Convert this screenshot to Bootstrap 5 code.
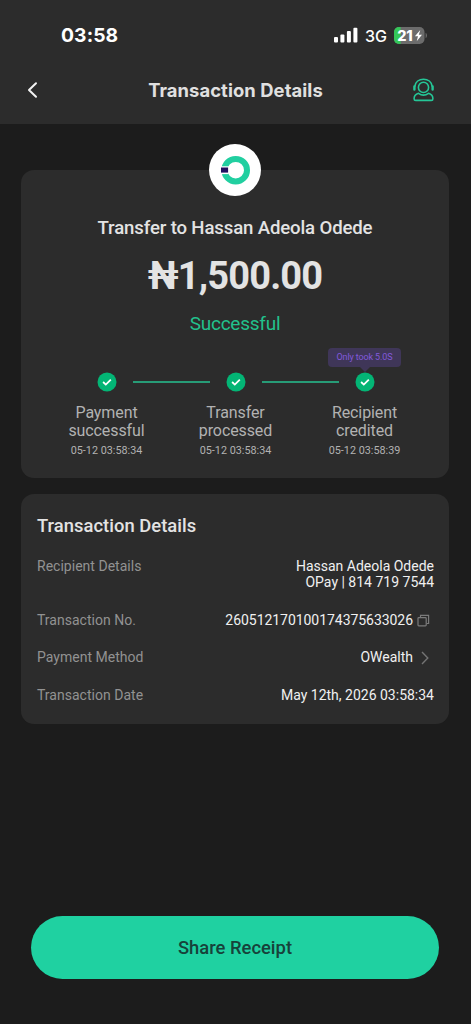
<!DOCTYPE html>
<html lang="en" data-bs-theme="dark">
<head>
<meta charset="utf-8">
<meta name="viewport" content="width=device-width, initial-scale=1">
<title>Transaction Details</title>
<link href="https://cdn.jsdelivr.net/npm/bootstrap@5.3.0/dist/css/bootstrap.min.css" rel="stylesheet">
<style>
body{background:#1c1c1c;color:#e3e3e3;font-family:Roboto,"Liberation Sans",sans-serif;height:1024px;overflow:hidden}
svg{display:block;flex:none}
.topbar{background:#2c2c2c;height:124px;font-family:Inter,"Liberation Sans",sans-serif}
.status{height:70px;padding:0 44px 0 61px}
.clock{font-size:19.3px;font-weight:700;color:#fff;letter-spacing:.1px}
.network{font-size:16px;font-weight:500;color:#fff;margin:1px 7px 0 7px}
.titlebar{height:40px;padding:0 36px 0 26px}
.titlebar h1{font-size:18.4px;font-weight:700;letter-spacing:.07px;color:#e0e0e0}
.titlebar .lead-icon{width:22px}
.panel{background:#2c2c2c;border:0;border-radius:13px;margin:0 22px 0 21px}
.summary{margin-top:46px;height:308px}
.logo{width:52px;height:52px;top:-26px;left:188.3px}
.recipient{font-size:18.6px;font-weight:500;line-height:24px;padding-top:46px;letter-spacing:-.14px}
.amount{font-size:38px;font-weight:700;line-height:46px;margin-top:13px;letter-spacing:-.85px}
.state{font-size:19px;line-height:24px;color:#22c18c;margin-top:13px;letter-spacing:-.25px}
.steps{margin:36px 20px 0 21px}
.step{width:129px;color:#b2b2b2;font-size:16px;line-height:18px;letter-spacing:-.1px}
.step-mark{height:20px;margin-bottom:12px}
.step-link{width:77px;height:2px;background:#279c77;top:9px;left:91px}
.step-time{font-size:10.8px;line-height:14px;margin-top:4px;letter-spacing:0}
.took{background:#3f3658;color:#8259dc;border-radius:4px;width:73px;height:19px;font-size:9px;line-height:19px;letter-spacing:-.12px;top:-24px;left:28px}
.took::after{content:"";position:absolute;left:32px;top:19px;border:5px solid transparent;border-top-color:#3f3658;border-bottom:0}
.details{margin-top:16px;height:230px;padding:20px 15px 0 16px}
.details h2{font-size:18.4px;font-weight:500;line-height:24px;letter-spacing:.03px;color:#e3e3e3;margin:0 0 20px}
.details dt{font-weight:400;color:#929292;font-size:14px;letter-spacing:.02px}
.details dd{color:#f0f0f0;font-size:14px;letter-spacing:0;margin:0;text-align:right}
.details .serial{letter-spacing:-.05px}
.entry{line-height:16px;margin-bottom:21.5px}
.share,.share:hover{margin:192px 32px 0 31px;height:63px;border-radius:32px;background:#1fd1a1;color:#17423a;font-size:18.4px;font-weight:500}
</style>
</head>
<body>
<header class="topbar">
  <div class="status d-flex align-items-center justify-content-between">
    <span class="clock">03:58</span>
    <div class="d-flex align-items-center">
      <svg width="24" height="16" viewBox="0 0 24 16" fill="#fff"><rect x="0" y="10" width="4" height="5.5" rx="1"/><rect x="6.4" y="7.4" width="4" height="8.1" rx="1"/><rect x="12.9" y="4.1" width="4" height="11.4" rx="1"/><rect x="19.4" y=".8" width="4" height="14.7" rx="1"/></svg>
      <span class="network">3G</span>
      <svg width="33" height="17" viewBox="0 0 33 17"><defs><clipPath id="charge"><rect width="30.5" height="17" rx="5"/></clipPath></defs><g clip-path="url(#charge)"><rect width="31" height="17" fill="#6c6c6c"/><rect width="6.6" height="17" fill="#34c759"/></g><path d="M31.6 5.7q1.4.8 1.4 2.8t-1.4 2.8z" fill="#6c6c6c"/><text x="3.2" y="13.700" font-family="Inter" font-size="14.5" font-weight="800" fill="#fff" letter-spacing="-.3">21</text><path d="M26.300 3.100 20.900 9.200h3.100l-1.300 5 5.300-6.400h-3.200z" fill="#fff"/></svg>
    </div>
  </div>
  <nav class="titlebar d-flex align-items-center justify-content-between">
    <svg width="32" height="18" viewBox="0 0 32 18" fill="none" stroke="#f2f2f2" stroke-width="2" stroke-linecap="round" stroke-linejoin="round"><path d="M10 2.200 3 9l7 6.800"/></svg>
    <h1 class="m-0">Transaction Details</h1>
    <svg width="22" height="24" viewBox="0 0 22 24" fill="none" stroke="#25c697" stroke-width="1.6" stroke-linecap="round" stroke-linejoin="round"><circle cx="10.500" cy="9.400" r="5.100"/><path d="M1.900 8.200C2.500 4.100 5.900 1.300 10.500 1.300s8 2.800 8.600 6.900"/><path d="M1.400 8.500v3M19.600 8.500v3" stroke-width="2.400"/><path d="M5.500 15.300c-2.900.8-4.400 3-4.400 5.400 0 1 .5 1.700 1.600 1.700h15.600c1.100 0 1.600-.7 1.600-1.700 0-2.400-1.500-4.600-4.400-5.400-3 2.200-7 2.200-10 0z"/></svg>
  </nav>
</header>
<main>
  <section class="card panel summary text-center">
    <svg class="logo position-absolute" viewBox="0 0 52 52"><circle cx="26" cy="26" r="26" fill="#fff"/><circle cx="26.700" cy="26.200" r="11.300" fill="none" stroke="#21cfa0" stroke-width="6"/><path d="M10 22.300h9.500v7.800H10z" fill="#fff"/><path d="M12 23.500h7.100v5.100H12z" fill="#210f60"/></svg>
    <div class="recipient">Transfer to Hassan Adeola Odede</div>
    <div class="amount">₦1,500.00</div>
    <div class="state">Successful</div>
    <div class="steps d-flex">
      <div class="step position-relative">
        <div class="step-mark d-flex justify-content-center"><svg width="20" height="20" viewBox="0 0 20 20"><circle cx="10" cy="10" r="9.500" fill="#03b575"/><path d="m6.100 10 2.700 2.600 5-5" fill="none" stroke="#fff" stroke-width="1.800"/></svg></div>
        <div class="step-link position-absolute"></div>
        Payment<br>successful<div class="step-time">05-12 03:58:34</div>
      </div>
      <div class="step position-relative">
        <div class="step-mark d-flex justify-content-center"><svg width="20" height="20" viewBox="0 0 20 20"><circle cx="10" cy="10" r="9.500" fill="#03b575"/><path d="m6.100 10 2.700 2.600 5-5" fill="none" stroke="#fff" stroke-width="1.800"/></svg></div>
        <div class="step-link position-absolute"></div>
        Transfer<br>processed<div class="step-time">05-12 03:58:34</div>
      </div>
      <div class="step position-relative">
        <div class="took position-absolute">Only took 5.0S</div>
        <div class="step-mark d-flex justify-content-center"><svg class="position-relative" width="20" height="20" viewBox="0 0 20 20"><circle cx="10" cy="10" r="9.500" fill="#03b575"/><path d="m6.100 10 2.700 2.600 5-5" fill="none" stroke="#fff" stroke-width="1.800"/></svg></div>
        Recipient<br>credited<div class="step-time">05-12 03:58:39</div>
      </div>
    </div>
  </section>
  <section class="card panel details">
    <h2>Transaction Details</h2>
    <dl class="m-0">
      <div class="entry d-flex justify-content-between"><dt>Recipient Details</dt><dd>Hassan Adeola Odede<br>OPay | 814 719 7544</dd></div>
      <div class="entry d-flex justify-content-between"><dt>Transaction No.</dt><dd class="serial d-flex">260512170100174375633026<svg width="21" height="16" viewBox="0 0 21 16" fill="none" stroke="#7b7b7b" stroke-width="1.200"><rect x="5" y="5.600" width="8.200" height="8.200" rx=".8"/><path d="M7.500 5.300V3.400h8.100v8.100h-2.100"/></svg></dd></div>
      <div class="entry d-flex justify-content-between"><dt>Payment Method</dt><dd class="d-flex">OWealth<svg width="21" height="16" viewBox="0 0 21 16" fill="none" stroke="#747474" stroke-width="1.400"><path d="m9 3 5.800 6L9 15"/></svg></dd></div>
      <div class="entry d-flex justify-content-between"><dt>Transaction Date</dt><dd>May 12th, 2026 03:58:34</dd></div>
    </dl>
  </section>
  <div class="d-grid"><button type="button" class="btn share border-0 p-0">Share Receipt</button></div>
</main>
<script src="https://cdn.jsdelivr.net/npm/bootstrap@5.3.0/dist/js/bootstrap.bundle.min.js"></script>
</body>
</html>
